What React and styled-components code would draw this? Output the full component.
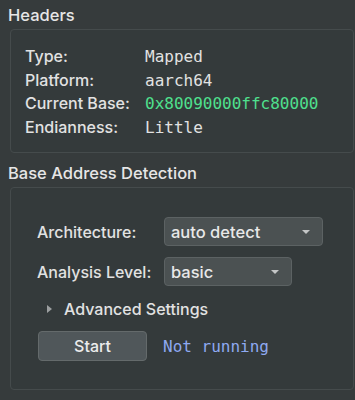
import { Fragment } from "react";
import styled, { createGlobalStyle } from "styled-components";

const Global = createGlobalStyle`
  html, body {
    margin: 0;
    padding: 0;
    background: #363b3c;
  }
  body {
    font-family: "Inter", "Noto Sans", sans-serif;
    font-weight: 500;
    color: #e2e2e2;
    height: 400px;
    overflow: hidden;
  }
`;

const Page = styled.div`
  display: flex;
  flex-direction: column;
  padding: 5px 1px 0 0;
`;

const SectionTitle = styled.div`
  font-size: 16.5px;
  line-height: 20px;
  padding-left: 8px;
  margin-top: ${(p) => (p.$first ? "0" : "10px")};
  margin-bottom: 4px;
  color: #e6e6e6;
`;

const GroupBox = styled.div`
  margin-left: 10px;
  border: 1px solid #454b4c;
  border-radius: 4px;
  background: #343a3b;
  padding: ${(p) => p.$pad};
`;

const InfoGrid = styled.div`
  display: grid;
  grid-template-columns: 120px auto;
  line-height: 23.5px;
  font-size: 16px;
`;

const Label = styled.div`
  color: #e2e2e2;
`;

const Value = styled.div`
  font-family: "DejaVu Sans Mono", "Liberation Mono", monospace;
  font-weight: 400;
  font-size: 16px;
  color: ${(p) => p.$color || "#e2e2e2"};
`;

const FormGrid = styled.div`
  display: grid;
  grid-template-columns: 127px auto;
  row-gap: 11px;
  align-items: center;
  font-size: 16px;
`;

const Select = styled.div`
  display: flex;
  align-items: center;
  justify-content: space-between;
  box-sizing: border-box;
  width: ${(p) => p.$width}px;
  height: 29px;
  padding: 0 12px 0 6px;
  background: #4b5152;
  border: 1px solid #5c6263;
  border-radius: 4px;
  font-size: 16.5px;
  color: #e8e8e8;
`;

const Caret = styled.span`
  width: 0;
  height: 0;
  border-left: 4px solid transparent;
  border-right: 4px solid transparent;
  border-top: 4.5px solid #c4c6c6;
`;

const Disclosure = styled.div`
  display: flex;
  align-items: center;
  gap: 12px;
  height: 20px;
  margin: 13px 0 12px 10px;
  font-size: 16px;
`;

const Arrow = styled.span`
  width: 0;
  height: 0;
  border-top: 4.5px solid transparent;
  border-bottom: 4.5px solid transparent;
  border-left: 5px solid #9c9fa0;
`;

const ActionRow = styled.div`
  display: flex;
  align-items: center;
  gap: 16px;
`;

const Button = styled.div`
  box-sizing: border-box;
  width: 109px;
  height: 30px;
  display: flex;
  align-items: center;
  justify-content: center;
  margin-left: 1px;
  background: #50575a;
  border: 1px solid #646a6b;
  border-radius: 4px;
  font-size: 16px;
  color: #ececec;
`;

const Status = styled.span`
  font-family: "DejaVu Sans Mono", "Liberation Mono", monospace;
  font-weight: 400;
  font-size: 16px;
  color: #8ea9f1;
`;

const headers = [
  ["Type:", "Mapped"],
  ["Platform:", "aarch64"],
  ["Current Base:", "0x80090000ffc80000", "#4fe08e"],
  ["Endianness:", "Little"],
];

export default function App() {
  return (
    <Page>
      <Global />
      <SectionTitle $first>Headers</SectionTitle>
      <GroupBox $pad="15px 0 13px 14px">
        <InfoGrid>
          {headers.map(([k, v, c]) => (
            <Fragment key={k}>
              <Label>{k}</Label>
              <Value $color={c}>{v}</Value>
            </Fragment>
          ))}
        </InfoGrid>
      </GroupBox>
      <SectionTitle>Base Address Detection</SectionTitle>
      <GroupBox $pad="29px 0 28px 26px">
        <FormGrid>
          <Label>Architecture:</Label>
          <Select $width={159}>
            auto detect
            <Caret />
          </Select>
          <Label>Analysis Level:</Label>
          <Select $width={128}>
            basic
            <Caret />
          </Select>
        </FormGrid>
        <Disclosure>
          <Arrow />
          Advanced Settings
        </Disclosure>
        <ActionRow>
          <Button>Start</Button>
          <Status>Not running</Status>
        </ActionRow>
      </GroupBox>
    </Page>
  );
}
